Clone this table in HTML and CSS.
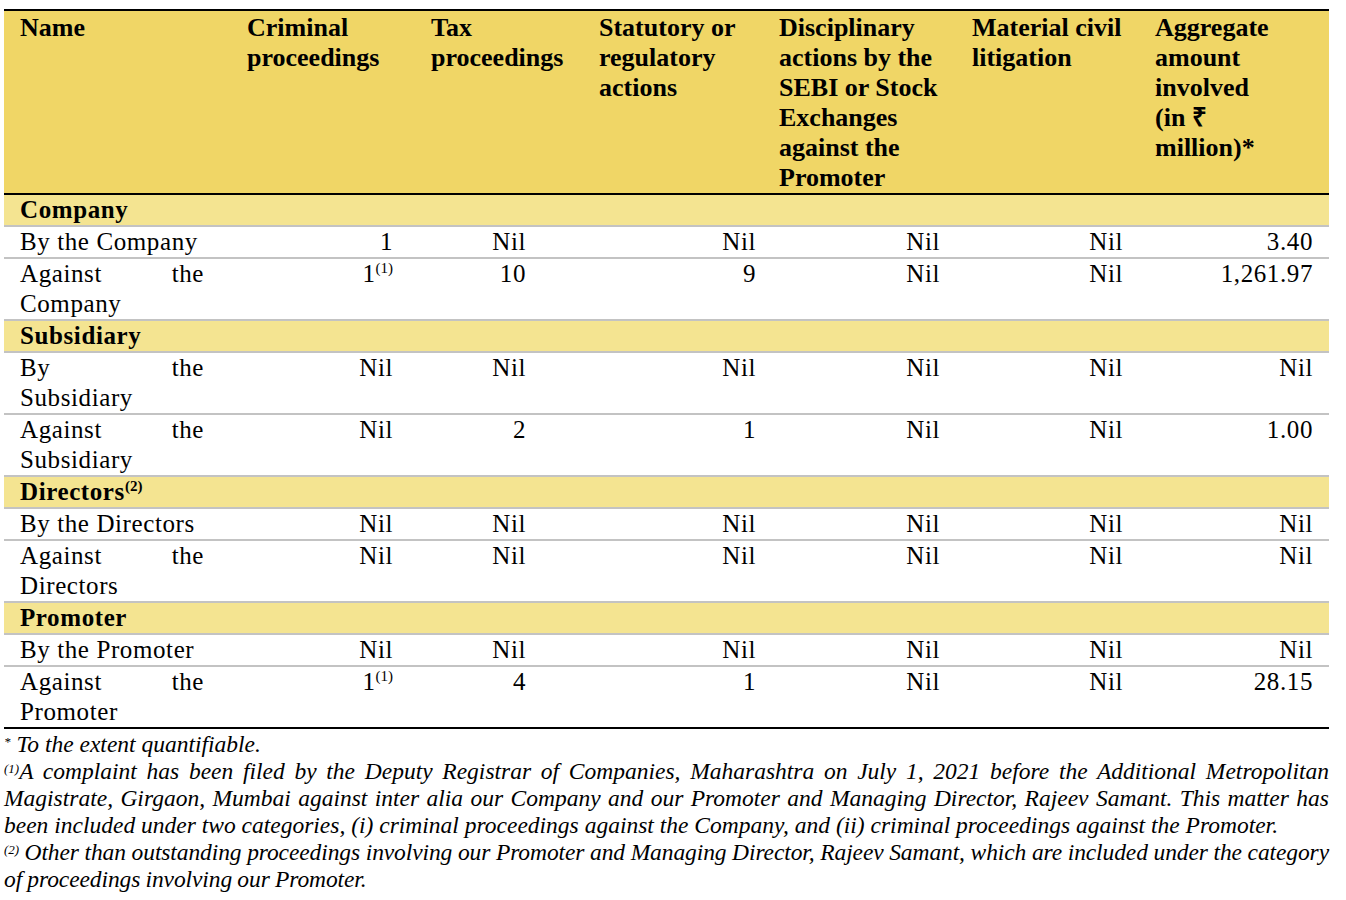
FILE: index.html
```
<!DOCTYPE html>
<html>
<head>
<meta charset="utf-8">
<link rel="stylesheet" href="styles.css">
</head>
<body>
<div class="page">
<table class="lit">
  <colgroup>
    <col class="w-name"><col class="w-crim"><col class="w-tax"><col class="w-stat"><col class="w-disc"><col class="w-mat"><col class="w-agg">
  </colgroup>
  <thead>
    <tr>
      <th>Name</th>
      <th>Criminal<br>proceedings</th>
      <th>Tax<br>proceedings</th>
      <th>Statutory or<br>regulatory<br>actions</th>
      <th>Disciplinary<br>actions by the<br>SEBI or Stock<br>Exchanges<br>against the<br>Promoter</th>
      <th>Material civil<br>litigation</th>
      <th>Aggregate<br>amount<br>involved<br>(in ₹<br>million)*</th>
    </tr>
  </thead>
  <tbody>
    <tr class="section"><td colspan="7">Company</td></tr>
    <tr>
      <td class="name">By the Company</td>
      <td class="n c2">1</td><td class="n c3">Nil</td><td class="n c4">Nil</td><td class="n c5">Nil</td><td class="n c6">Nil</td><td class="n c7">3.40</td>
    </tr>
    <tr>
      <td class="name">Against the Company</td>
      <td class="n c2">1<sup class="fn">(1)</sup></td><td class="n c3">10</td><td class="n c4">9</td><td class="n c5">Nil</td><td class="n c6">Nil</td><td class="n c7">1,261.97</td>
    </tr>
    <tr class="section"><td colspan="7">Subsidiary</td></tr>
    <tr>
      <td class="name">By the Subsidiary</td>
      <td class="n c2">Nil</td><td class="n c3">Nil</td><td class="n c4">Nil</td><td class="n c5">Nil</td><td class="n c6">Nil</td><td class="n c7">Nil</td>
    </tr>
    <tr>
      <td class="name">Against the Subsidiary</td>
      <td class="n c2">Nil</td><td class="n c3">2</td><td class="n c4">1</td><td class="n c5">Nil</td><td class="n c6">Nil</td><td class="n c7">1.00</td>
    </tr>
    <tr class="section"><td colspan="7">Directors<sup class="fn">(2)</sup></td></tr>
    <tr>
      <td class="name">By the Directors</td>
      <td class="n c2">Nil</td><td class="n c3">Nil</td><td class="n c4">Nil</td><td class="n c5">Nil</td><td class="n c6">Nil</td><td class="n c7">Nil</td>
    </tr>
    <tr>
      <td class="name">Against the Directors</td>
      <td class="n c2">Nil</td><td class="n c3">Nil</td><td class="n c4">Nil</td><td class="n c5">Nil</td><td class="n c6">Nil</td><td class="n c7">Nil</td>
    </tr>
    <tr class="section"><td colspan="7">Promoter</td></tr>
    <tr>
      <td class="name">By the Promoter</td>
      <td class="n c2">Nil</td><td class="n c3">Nil</td><td class="n c4">Nil</td><td class="n c5">Nil</td><td class="n c6">Nil</td><td class="n c7">Nil</td>
    </tr>
    <tr class="last">
      <td class="name">Against the Promoter</td>
      <td class="n c2">1<sup class="fn">(1)</sup></td><td class="n c3">4</td><td class="n c4">1</td><td class="n c5">Nil</td><td class="n c6">Nil</td><td class="n c7">28.15</td>
    </tr>
  </tbody>
</table>
<div class="notes">
  <p><sup class="nsup">*</sup> To the extent quantifiable.</p>
  <p><sup class="nsup">(1)</sup>A complaint has been filed by the Deputy Registrar of Companies, Maharashtra on July 1, 2021 before the Additional Metropolitan Magistrate, Girgaon, Mumbai against inter alia our Company and our Promoter and Managing Director, Rajeev Samant. This matter has been included under two categories, (i) criminal proceedings against the Company, and (ii) criminal proceedings against the Promoter.</p>
  <p class="tight"><sup class="nsup">(2)</sup> Other than outstanding proceedings involving our Promoter and Managing Director, Rajeev Samant, which are included under the category of proceedings involving our Promoter.</p>
</div>
</div>
</body>
</html>
```
FILE: styles.css
```
html, body {
  margin: 0;
  padding: 0;
  background: #ffffff;
}

.page {
  padding: 9px 0 0 4px;
  width: 1325px;
  font-family: "Liberation Serif", "Times New Roman", serif;
  color: #000;
}

.lit {
  width: 1325px;
  table-layout: fixed;
  border-collapse: collapse;
}

.w-name { width: 227px; }
.w-crim { width: 184px; }
.w-tax { width: 168px; }
.w-stat { width: 180px; }
.w-disc { width: 193px; }
.w-mat { width: 183px; }
.w-agg { width: 190px; }

.lit th {
  background: #f0d666;
  text-align: left;
  vertical-align: top;
  font-weight: bold;
  font-size: 26px;
  line-height: 30px;
  padding: 2px 4px 0 16px;
  white-space: nowrap;
  border-top: 2px solid #000;
  border-bottom: 2px solid #000;
}

.lit td {
  font-size: 25px;
  letter-spacing: 0.6px;
  line-height: 30px;
  padding: 0;
  vertical-align: top;
  border-bottom: 2px solid #c3c3c3;
}

.lit tr.section td {
  background: #f4e491;
  font-weight: bold;
  line-height: 30px;
  padding: 0 16px;
}

.lit tr.last td {
  border-bottom: 2px solid #000;
}

.lit td.name {
  padding: 0 27px 0 16px;
  text-align: justify;
}

.lit td.n { text-align: right; }
.lit td.c2 { padding-right: 22px; }
.lit td.c3 { padding-right: 57px; }
.lit td.c4 { padding-right: 7px; }
.lit td.c5 { padding-right: 16px; }
.lit td.c6 { padding-right: 16px; }
.lit td.c7 { padding-right: 16px; }

.fn {
  font-size: 15px;
  letter-spacing: 0;
  line-height: 0;
  vertical-align: 9px;
}

.notes {
  margin-top: 2px;
  font-style: italic;
  font-size: 23.5px;
  line-height: 27px;
  text-align: justify;
}

.notes p {
  margin: 0;
}

.notes p.tight {
  letter-spacing: -0.1px;
  word-spacing: -0.5px;
}

.nsup {
  font-size: 13px;
  line-height: 0;
  vertical-align: 6px;
}
```
